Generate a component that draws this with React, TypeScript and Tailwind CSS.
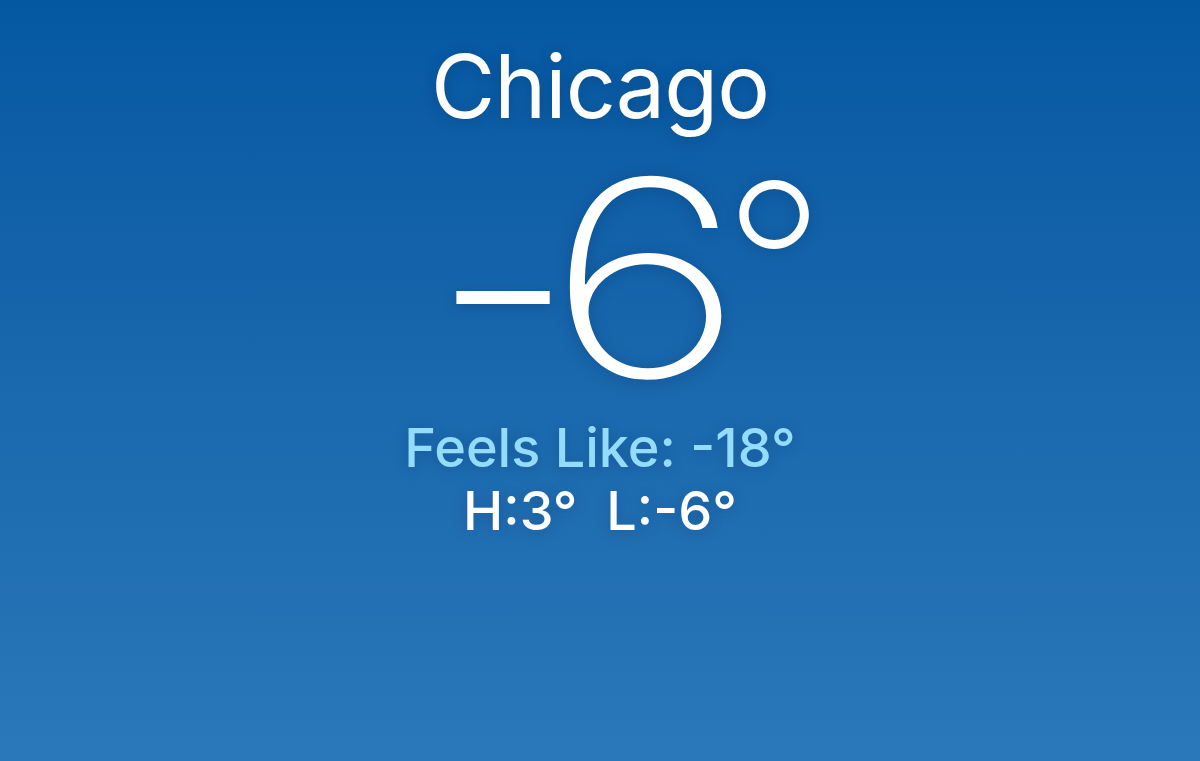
export default function App() {
  const shadow = "[text-shadow:0_2px_14px_rgba(0,30,80,0.25)]";
  return (
    <div
      className="w-[1200px] h-[761px] overflow-hidden bg-gradient-to-b from-[#0458a2] to-[#2a78b9] flex flex-col items-center text-white"
      style={{ fontFamily: "Inter, 'Open Sans', sans-serif" }}
    >
      <div className={`mt-[36px] text-[88px] leading-[100px] font-normal tracking-[-1px] ${shadow}`}>
        Chicago
      </div>
      <div className={`mt-[22px] ml-[66px] flex items-baseline h-[240px] leading-[240px] text-[273px] font-[150] ${shadow}`}>
        <span className="w-[90px] flex justify-center relative top-[-4px]">
          <span className="inline-block scale-x-[0.8] scale-y-[1.1]">−</span>
        </span>
        <span className="w-[148px] ml-[24px] flex justify-center">
          <span className="inline-block scale-x-[1.24]">6</span>
        </span>
        <span className="w-[68px] ml-[20px] flex justify-center text-[226px] font-[170] relative top-[-31px]">
          <span className="inline-block">°</span>
        </span>
      </div>
      <div className={`mt-[20px] text-[54px] leading-[60px] font-[450] text-[#93dcfd] ${shadow}`}>
        Feels Like: -18°
      </div>
      <div className={`mt-[3px] text-[54px] leading-[60px] font-medium whitespace-pre ${shadow}`}>
        H:3°  L:-6°
      </div>
    </div>
  );
}
